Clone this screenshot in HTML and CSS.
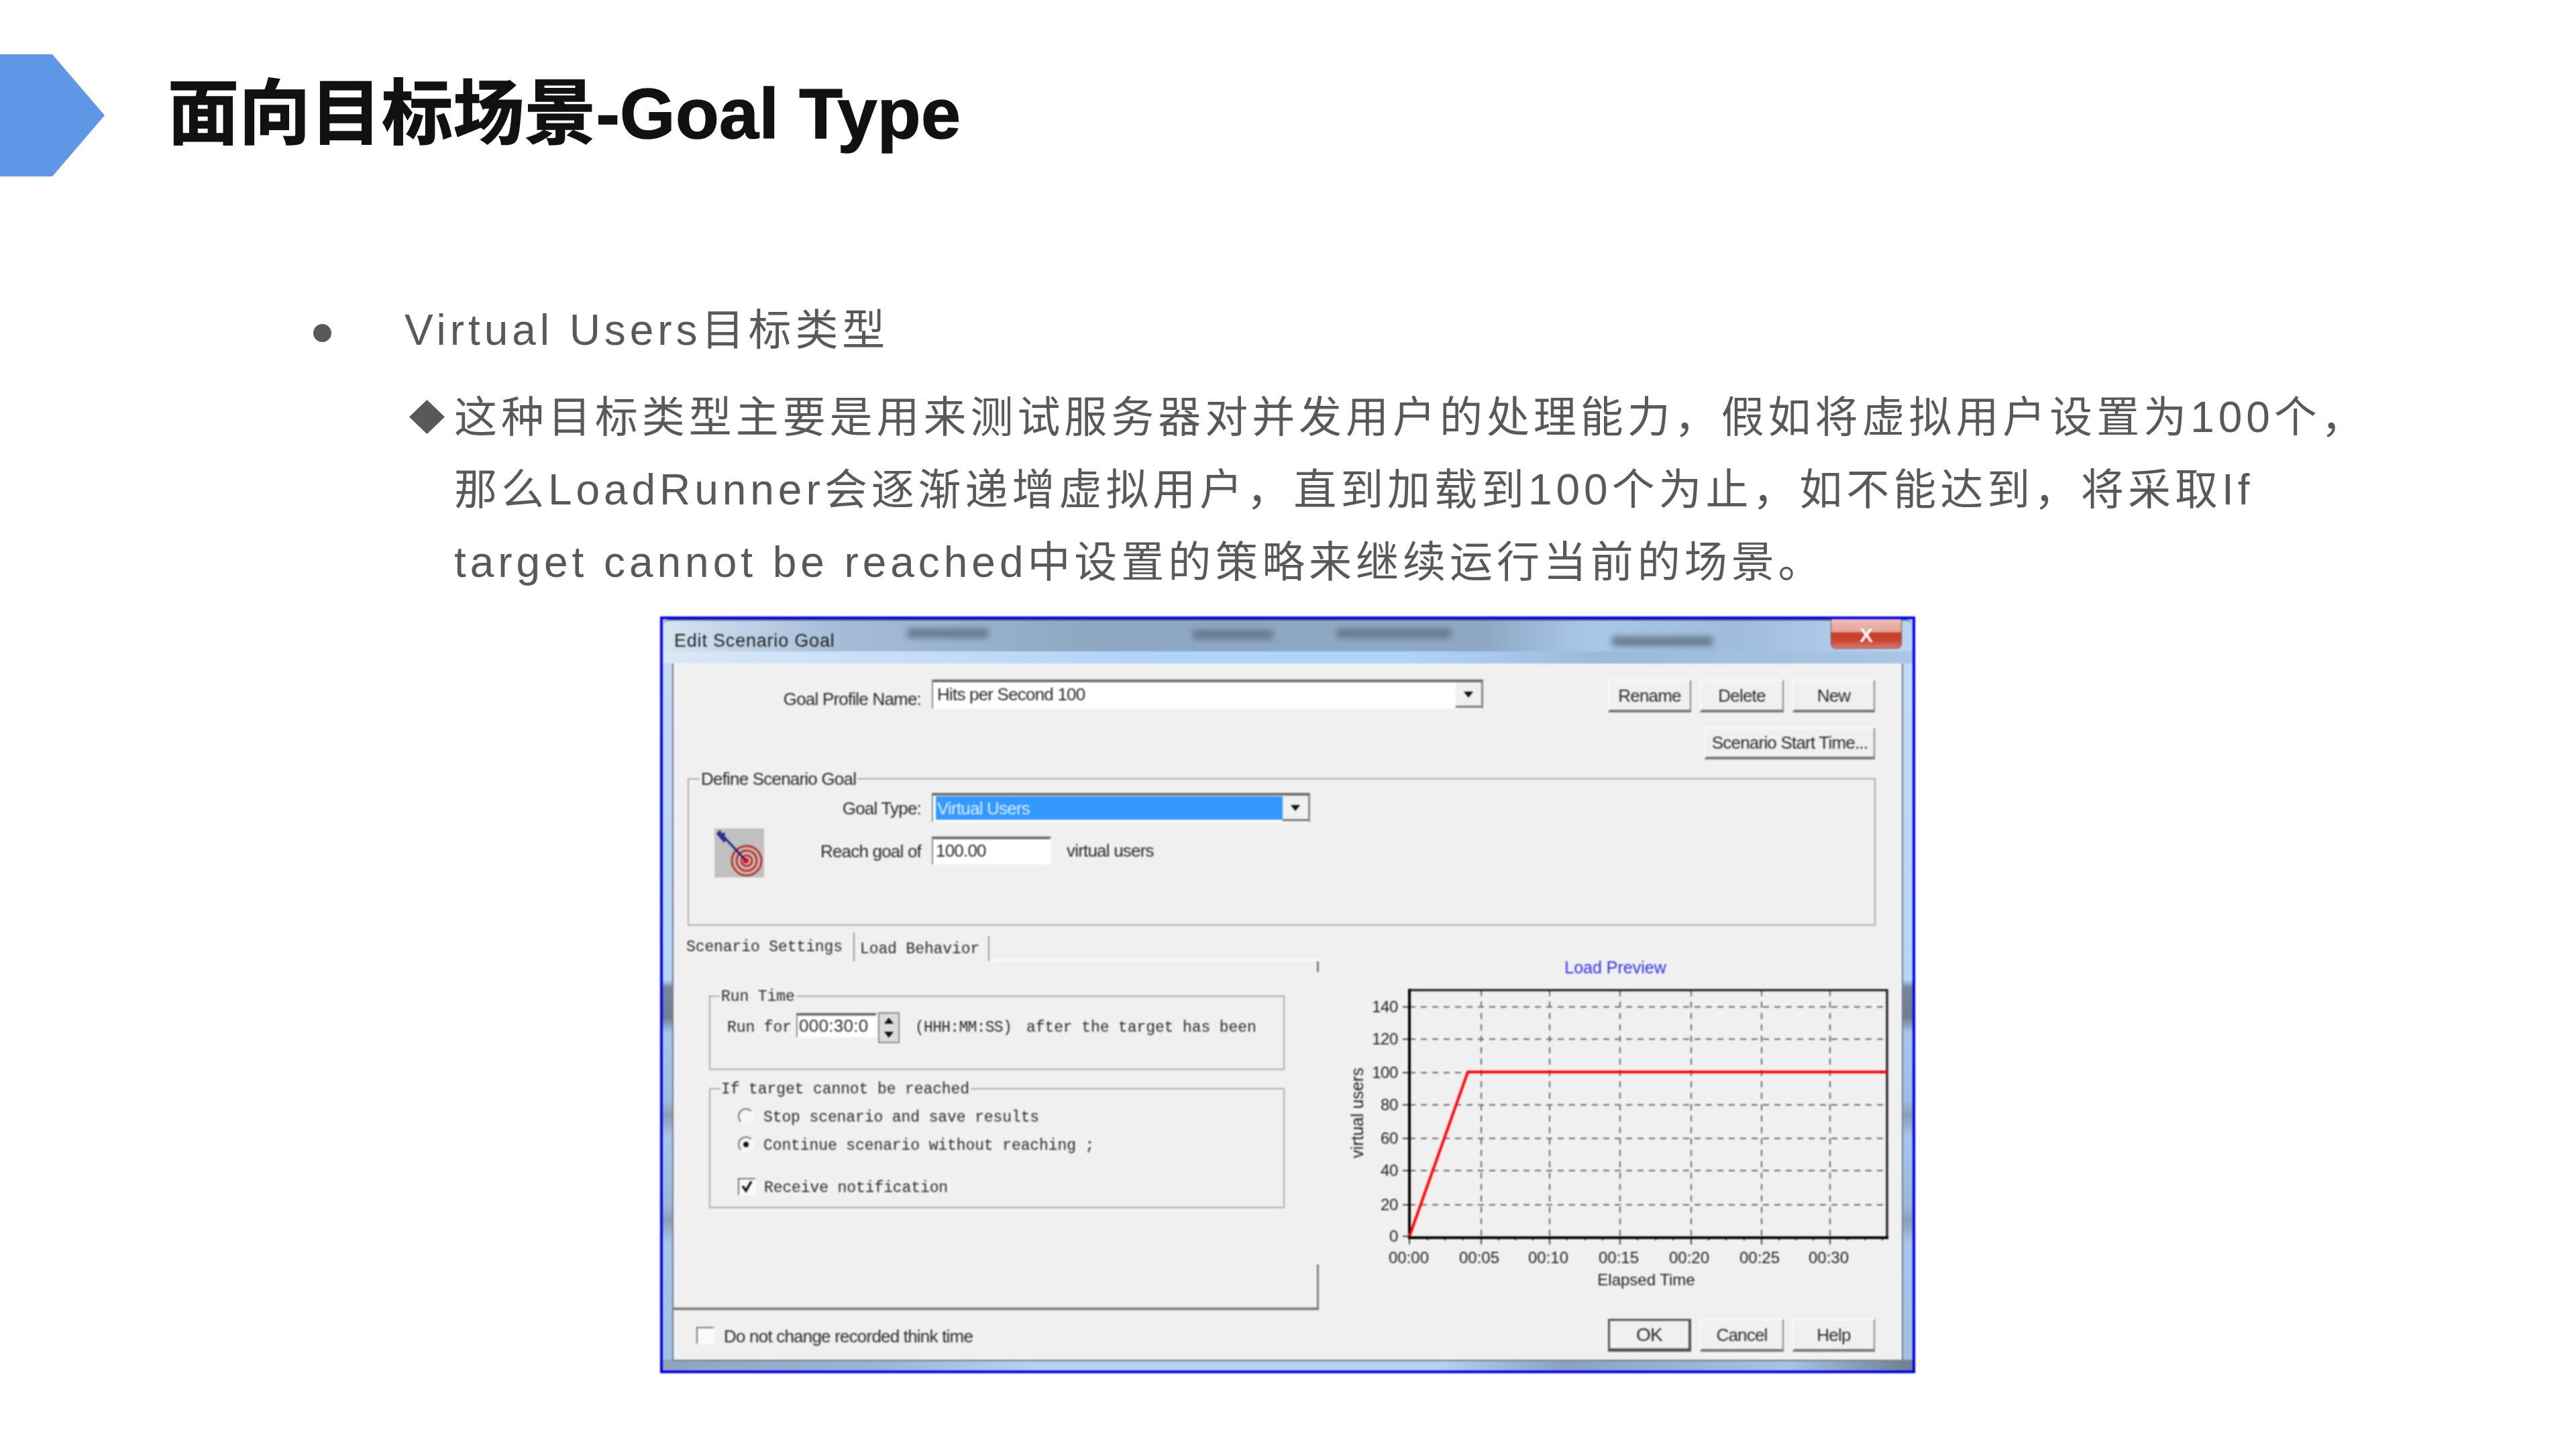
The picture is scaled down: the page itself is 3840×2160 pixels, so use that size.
FILE: index.html
```html
<!DOCTYPE html>
<html lang="zh-CN">
<head>
  <meta charset="UTF-8" />
  <title>面向目标场景-Goal Type</title>
  <link rel="stylesheet" href="styles.css">
</head>
<body>

<header class="head">
  <div class="head-arrow"></div>
  <h1 class="head-title">面向目标场景-Goal Type</h1>
</header>

<section class="notes">
  <div class="notes-item">
    <span class="notes-dot"></span>
    <span>Virtual Users目标类型</span>
  </div>
  <div class="notes-detail">
    <span class="notes-diamond"></span>
    <p class="notes-text">这种目标类型主要是用来测试服务器对并发用户的处理能力，假如将虚拟用户设置为100个，<br>那么LoadRunner会逐渐递增虚拟用户，直到加载到100个为止，如不能达到，将采取If<br>target cannot be reached中设置的策略来继续运行当前的场景。</p>
  </div>
</section>

<div class="dialog">
  <div class="titlebar">
    <span class="smudge smudge-a"></span>
    <span class="smudge smudge-b"></span>
    <span class="smudge smudge-c"></span>
    <span class="smudge smudge-d"></span>
    <span class="titlebar-text">Edit Scenario Goal</span>
    <span class="close-btn">X</span>
  </div>

  <div class="panel">
    <div class="profile-row">
      <label class="profile-label">Goal Profile Name:</label>
      <div class="combo combo-profile">
        <span class="combo-value">Hits per Second 100</span>
        <span class="combo-arrow"></span>
      </div>
      <div class="btn-group">
        <button class="btn btn-a">Rename</button>
        <button class="btn btn-b">Delete</button>
        <button class="btn btn-c">New</button>
      </div>
    </div>
    <div class="start-row">
      <button class="btn btn-start">Scenario Start Time...</button>
    </div>

    <div class="group group-define">
      <span class="legend legend-define">Define Scenario Goal</span>
      <div class="define-grid">
        <span class="define-label">Goal Type:</span>
        <div class="combo combo-type">
          <span class="combo-selected">Virtual Users</span>
          <span class="combo-arrow"></span>
        </div>
        <svg class="target-icon" viewBox="0 0 74 73">
          <rect width="74" height="73" fill="#c0c0c0"/>
          <ellipse cx="48" cy="48" rx="22" ry="22" fill="#d6b4b0" stroke="#a83a36" stroke-width="3"/>
          <ellipse cx="48" cy="48" rx="15" ry="15" fill="#d6b4b0" stroke="#a83a36" stroke-width="3"/>
          <ellipse cx="48" cy="48" rx="8" ry="8" fill="#d6b4b0" stroke="#a83a36" stroke-width="3"/>
          <circle cx="47" cy="48" r="4" fill="#f00"/>
          <path d="M10 8 L46 47" stroke="#1c2388" stroke-width="3" fill="none"/>
          <path d="M3 8 L8 2 L11 7 L16 6 L15 14 L20 16 L14 21 Z" fill="#2a3190"/>
        </svg>
        <span class="define-label define-label-reach">Reach goal of</span>
        <div class="reach">
          <div class="field field-reach">100.00</div>
          <span class="reach-unit">virtual users</span>
        </div>
      </div>
    </div>

    <div class="lower">
      <div class="tab-col">
        <div class="tabs">
          <span class="tab tab-active">Scenario Settings</span>
          <span class="tab tab-other">Load Behavior</span>
          <span class="tabs-rest"></span>
        </div>
        <div class="pane">
          <div class="group group-run">
            <span class="legend legend-mono">Run Time</span>
            <div class="run-row">
              <span>Run for</span>
              <div class="field field-time">000:30:0</div>
              <div class="spin">
                <span class="spin-btn"><i class="tri-up"></i></span>
                <span class="spin-btn"><i class="tri-down"></i></span>
              </div>
              <span class="run-format">(HHH:MM:SS)</span>
              <span class="run-after">after the target has been</span>
            </div>
          </div>
          <div class="group group-target">
            <span class="legend legend-mono">If target cannot be reached</span>
            <div class="option">
              <span class="radio"></span>
              <span>Stop scenario and save results</span>
            </div>
            <div class="option">
              <span class="radio radio-on"></span>
              <span>Continue scenario without reaching ;</span>
            </div>
            <div class="option option-check">
              <span class="check">
                <svg viewBox="0 0 23 22" class="check-mark"><path d="M5 10 L10 17 L18 3" fill="none" stroke="#111" stroke-width="3.5"/></svg>
              </span>
              <span>Receive notification</span>
            </div>
          </div>
        </div>
      </div>

      <svg class="chart" viewBox="0 0 870 540">
        <text class="chart-title" x="442" y="61">Load Preview</text>
        <path class="chart-grid" d="M135 111H847 M135 159H847 M135 209H847 M135 257H847 M135 307H847 M135 355H847 M135 406H847 M242 86V453 M344 86V453 M449 86V453 M555 86V453 M660 86V453 M762 86V453"/>
        <path class="chart-tick" d="M125 111H135 M125 159H135 M125 209H135 M125 257H135 M125 307H135 M125 355H135 M125 406H135 M125 453H135 M135 453V465 M242 453V465 M344 453V465 M449 453V465 M555 453V465 M660 453V465 M762 453V465 M162 453V459 M188 453V459 M215 453V459 M268 453V459 M293 453V459 M319 453V459 M370 453V459 M397 453V459 M423 453V459 M475 453V459 M502 453V459 M528 453V459 M581 453V459 M607 453V459 M634 453V459 M686 453V459 M711 453V459 M737 453V459 M788 453V459 M814 453V459 M840 453V459"/>
        <path class="chart-frame" d="M135 86H847V453"/>
        <path class="chart-axis" d="M135 84V455H849"/>
        <path class="chart-line" d="M135 453L222 208H847"/>
        <g class="chart-y">
          <text x="118" y="119">140</text>
          <text x="118" y="167">120</text>
          <text x="118" y="217">100</text>
          <text x="118" y="265">80</text>
          <text x="118" y="315">60</text>
          <text x="118" y="363">40</text>
          <text x="118" y="414">20</text>
          <text x="118" y="461">0</text>
        </g>
        <g class="chart-x">
          <text x="134" y="493">00:00</text>
          <text x="239" y="493">00:05</text>
          <text x="342" y="493">00:10</text>
          <text x="447" y="493">00:15</text>
          <text x="552" y="493">00:20</text>
          <text x="657" y="493">00:25</text>
          <text x="760" y="493">00:30</text>
          <text x="488" y="526">Elapsed Time</text>
        </g>
        <text class="chart-ylabel" transform="translate(66 269) rotate(-90)">virtual users</text>
      </svg>
    </div>

    <div class="foot-row">
      <span class="check"></span>
      <span class="foot-text">Do not change recorded think time</span>
      <div class="btn-group">
        <button class="btn btn-a btn-ok">OK</button>
        <button class="btn btn-b btn-low">Cancel</button>
        <button class="btn btn-c btn-low">Help</button>
      </div>
    </div>
  </div>
</div>

</body>
</html>
```

FILE: styles.css
```css
* {
  box-sizing: border-box;
}
html, body {
  margin: 0;
  width: 3840px;
  height: 2160px;
  overflow: hidden;
  background: #fff;
}
body {
  font-family: "Liberation Sans", "Noto Sans CJK SC", sans-serif;
  color: #595959;
}

/* slide header */
.head {
  display: flex;
  align-items: center;
  gap: 94px;
  height: 182px;
  margin-top: 81px;
}
.head-arrow {
  width: 156px;
  height: 182px;
  background: #5f97e7;
  clip-path: polygon(0 0, 78px 0, 100% 50%, 78px 100%, 0 100%);
}
.head-title {
  margin: 0 0 4px;
  font-size: 106px;
  font-weight: bold;
  letter-spacing: 0.4px;
  line-height: 1.2;
  color: #111;
  -webkit-text-stroke: 1.5px #111;
}

/* bullet text */
.notes {
  margin-top: 175px;
  padding-left: 467px;
  font-size: 64px;
  letter-spacing: 5.95px;
  line-height: 108px;
}
.notes-item {
  display: flex;
  align-items: center;
  gap: 109px;
}
.notes-dot {
  width: 27px;
  height: 27px;
  margin-top: 8px;
  border-radius: 50%;
  background: #595959;
}
.notes-detail {
  display: flex;
  margin-top: 22px;
  padding-left: 143px;
}
.notes-diamond {
  flex: none;
  width: 53px;
  height: 51px;
  margin: 28px 14px 0 0;
  background: #595959;
  clip-path: polygon(50% 0, 100% 50%, 50% 100%, 0 50%);
}
.notes-text {
  margin: 0;
  white-space: nowrap;
}

/* dialog window */
.dialog {
  width: 1871px;
  height: 1128px;
  margin: 27px 0 0 984px;
  border: 4px solid #0000ee;
  background:
    linear-gradient(to right, #8fa5bd 0, #9db7d3 18%, #b5d3f3 30%, #b5d3f3 62%, #8aa2bd 72%, #a8c4e2 90%, #6e7f90 100%) bottom / 100% 16px no-repeat,
    linear-gradient(to bottom, #c7dcf3 0, #b7d6f6 48%, #76879a 49%, #6f7f8e 53%, #a8c6e8 55%, #a0bedf 64%, #8c9fb6 66%, #a8c6e8 69%, #9cb8d8 78%, #8c9fb6 80%, #a8c6e8 83%, #a3bfdf 100%);
  filter: blur(0.8px);
  color: #2a2a2a;
  font-size: 26px;
  letter-spacing: -0.8px;
  line-height: 30px;
}
.titlebar {
  position: relative;
  height: 66px;
  border-top: 2px solid #566575;
  border-radius: 10px 10px 0 0;
  background:
    linear-gradient(to right, #d7e4f2 0, #a5bdd8 14%, #8ea8c4 34%, #8ea8c4 66%, #a9c8e8 74%, #9fbcdb 86%, #bad6f1 100%) top / 100% 46px no-repeat,
    linear-gradient(to right, #dbe8f6 0, #b0d3fa 40%, #b0d3fa 60%, #9bbad9 75%, #a9c6e4 100%);
}
.titlebar-text {
  position: absolute;
  left: 17px;
  top: 15px;
  font-size: 27px;
  letter-spacing: 0.8px;
  color: #222;
}
.smudge {
  position: absolute;
  height: 14px;
  background: #66788c;
  filter: blur(5px);
}
.smudge-a { left: 365px; top: 12px; width: 120px; }
.smudge-b { left: 790px; top: 14px; width: 120px; }
.smudge-c { left: 1005px; top: 12px; width: 170px; }
.smudge-d { left: 1415px; top: 24px; width: 150px; }
.close-btn {
  position: absolute;
  right: 16px;
  top: -2px;
  width: 106px;
  height: 44px;
  border: 1px solid #7c4a44;
  border-top: none;
  border-radius: 0 0 8px 8px;
  background: linear-gradient(to bottom, #eec0b8 0, #e2a398 44%, #c63f28 48%, #c8452f 74%, #d97a70 100%);
  color: #fff;
  font-size: 30px;
  font-weight: bold;
  letter-spacing: 0;
  line-height: 48px;
  text-align: center;
}

.panel {
  height: 1038px;
  margin: 0 16px;
  background: #f0f0f0;
  box-shadow: 0 0 0 2px #6c7a88;
}
.profile-row {
  display: flex;
  align-items: flex-start;
  padding: 24px 40px 0 0;
}
.profile-label {
  width: 369px;
  margin-top: 14px;
  text-align: right;
}
.btn-group {
  display: flex;
  gap: 13px;
  margin-left: auto;
}
.btn {
  height: 49px;
  padding: 0;
  border-style: solid;
  border-width: 2px 2px 4px 2px;
  border-color: #fbfbfb #8a8a8a #777 #fbfbfb;
  background: #f0f0f0;
  color: #2a2a2a;
  font: inherit;
  letter-spacing: inherit;
}
.btn-a { width: 124px; }
.btn-b { width: 125px; }
.btn-c { width: 123px; }
.start-row {
  display: flex;
  justify-content: flex-end;
  margin-top: 22px;
  padding-right: 40px;
}
.btn-start {
  width: 254px;
  height: 48px;
}
.btn-ok {
  border-width: 3px 4px 5px 3px;
  border-color: #555 #555 #555 #555;
  font-size: 28px;
}
.combo {
  display: flex;
  height: 44px;
  border-style: solid;
  border-width: 4px 3px 2px 2px;
  border-color: #6e6e6e #8a8a8a #fafafa #8a8a8a;
  background: #fff;
}
.combo-profile {
  width: 822px;
  margin-left: 16px;
}
.combo-type {
  width: 564px;
  margin-left: 16px;
}
.combo-value {
  flex: 1;
  padding-left: 6px;
  line-height: 37px;
}
.combo-selected {
  flex: 1;
  margin: 1px 0 2px 4px;
  padding-left: 2px;
  background: #3399ff;
  color: #dfeeff;
  line-height: 36px;
}
.combo-arrow {
  position: relative;
  flex: none;
  width: 38px;
  border-bottom: 3px solid #777;
  background: #f0f0f0;
}
.combo-arrow::after {
  content: "";
  position: absolute;
  left: 12px;
  top: 14px;
  border: 7px solid transparent;
  border-top: 9px solid #111;
  border-bottom: none;
}

/* group boxes */
.group {
  position: relative;
  border: 2px solid #ababab;
}
.legend {
  position: absolute;
  left: 16px;
  top: -16px;
  padding: 0 2px;
  background: #f0f0f0;
}
.legend-mono {
  left: 14px;
  top: -15px;
  font-family: "Liberation Mono", monospace;
  font-size: 23px;
  letter-spacing: -0.1px;
}
.group-define {
  height: 220px;
  margin: 28px 39px 0 21px;
}
.define-grid {
  display: grid;
  grid-template-columns: 74px 234px 1fr;
  grid-template-rows: 43px 73px;
  row-gap: 10px;
  padding: 20px 0 0 38px;
}
.define-label {
  grid-column: 2;
  align-self: center;
  margin-top: 3px;
  text-align: right;
}
.define-label-reach {
  align-self: start;
  margin-top: 19px;
}
.target-icon {
  grid-column: 1;
  grid-row: 2;
  width: 74px;
  height: 73px;
}
.reach {
  display: flex;
  align-items: center;
  height: 42px;
  margin: 12px 0 0 16px;
}
.reach-unit {
  margin-left: 23px;
}
.field {
  border-style: solid;
  border-width: 4px 2px 2px 2px;
  border-color: #6e6e6e #fafafa #fafafa #8a8a8a;
  background: #fff;
}
.field-reach {
  width: 178px;
  height: 42px;
  padding-left: 4px;
  line-height: 34px;
}

/* tabs and the settings pane */
.lower {
  display: flex;
  margin-top: 10px;
}
.tab-col {
  flex: none;
  width: 962px;
  height: 563px;
}
.tabs {
  display: flex;
  height: 43px;
  font-family: "Liberation Mono", monospace;
  font-size: 23px;
  letter-spacing: -0.1px;
}
.tab {
  border-right: 2px solid #999;
}
.tab-active {
  width: 270px;
  padding: 7px 0 0 19px;
}
.tab-other {
  width: 201px;
  height: 38px;
  margin-top: 5px;
  padding: 5px 0 0 8px;
}
.tabs-rest {
  flex: 1;
  border-bottom: 3px solid #fbfbfb;
}
.pane {
  position: relative;
  height: 520px;
  padding: 51px 0 0 53px;
  border-bottom: 4px solid #808080;
  font-family: "Liberation Mono", monospace;
  font-size: 23px;
  letter-spacing: -0.1px;
}
.pane::before,
.pane::after {
  content: "";
  position: absolute;
  right: 0;
  width: 3px;
  background: #808080;
}
.pane::before {
  top: 0;
  height: 16px;
}
.pane::after {
  bottom: 0;
  height: 64px;
}
.group-run {
  width: 858px;
  height: 111px;
}
.run-row {
  display: flex;
  align-items: center;
  height: 46px;
  margin-top: 23px;
  padding-left: 25px;
}
.field-time {
  width: 120px;
  height: 37px;
  margin: -8px 0 0 7px;
  padding-left: 2px;
  font-family: "Liberation Sans", sans-serif;
  font-size: 26px;
  letter-spacing: 0.3px;
  line-height: 30px;
  overflow: hidden;
}
.spin {
  display: flex;
  flex-direction: column;
  width: 32px;
  height: 46px;
  margin-left: 2px;
  border: 2px solid #8a8a8a;
  background: #dcdcdc;
}
.spin-btn {
  display: flex;
  flex: 1;
  align-items: center;
  justify-content: center;
}
.tri-up {
  border: 7px solid transparent;
  border-bottom: 9px solid #111;
  border-top: none;
}
.tri-down {
  border: 7px solid transparent;
  border-top: 9px solid #111;
  border-bottom: none;
}
.run-format {
  margin-left: 23px;
  letter-spacing: -0.7px;
}
.run-after {
  margin-left: 22px;
}
.group-target {
  width: 858px;
  height: 179px;
  margin-top: 27px;
  padding: 25px 0 0 41px;
}
.option {
  display: flex;
  align-items: center;
  gap: 14px;
  height: 30px;
  margin-bottom: 12px;
}
.option > span:last-child {
  padding-top: 3px;
}
.option-check {
  gap: 12px;
  margin-top: 33px;
}
.radio {
  position: relative;
  width: 24px;
  height: 24px;
  border: 2px solid;
  border-color: #777 #fbfbfb #fbfbfb #777;
  border-radius: 50%;
  background: #f5f5f5;
}
.radio-on::after {
  content: "";
  position: absolute;
  left: 6px;
  top: 6px;
  width: 8px;
  height: 8px;
  border-radius: 50%;
  background: #111;
}
.check {
  flex: none;
  width: 27px;
  height: 26px;
  border: 2px solid;
  border-color: #777 #fbfbfb #fbfbfb #777;
  background: #fafafa;
}
.check-mark {
  display: block;
  width: 23px;
  height: 22px;
}

/* load preview chart */
.chart {
  flex: none;
  width: 870px;
  height: 540px;
  font-size: 24px;
  letter-spacing: 0;
}
.chart-title {
  fill: #3030e8;
  font-size: 25px;
  text-anchor: middle;
}
.chart-grid {
  fill: none;
  stroke: #666;
  stroke-width: 2;
  stroke-dasharray: 9 8;
}
.chart-tick {
  fill: none;
  stroke: #444;
  stroke-width: 2;
}
.chart-frame {
  fill: none;
  stroke: #111;
  stroke-width: 3;
}
.chart-axis {
  fill: none;
  stroke: #000;
  stroke-width: 4;
}
.chart-line {
  fill: none;
  stroke: #f00;
  stroke-width: 4;
}
.chart-y text {
  fill: #1f1f1f;
  letter-spacing: -0.4px;
  text-anchor: end;
}
.chart-x text {
  fill: #1f1f1f;
  text-anchor: middle;
}
.chart-ylabel {
  fill: #1f1f1f;
  font-size: 25px;
  text-anchor: middle;
}

.foot-row {
  display: flex;
  align-items: center;
  height: 49px;
  margin-top: 13px;
  padding: 0 40px 0 34px;
}
.foot-text {
  margin-left: 14px;
  padding-top: 3px;
}
```
